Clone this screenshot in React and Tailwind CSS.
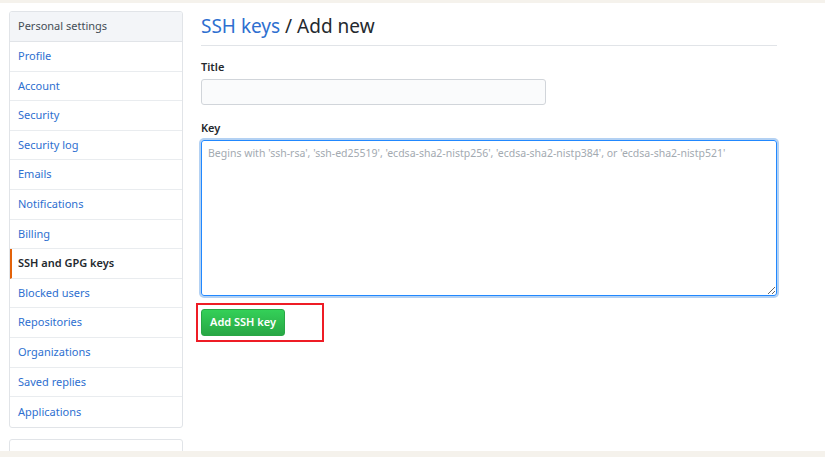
import React from 'react';

const items = [
  'Profile',
  'Account',
  'Security',
  'Security log',
  'Emails',
  'Notifications',
  'Billing',
  'SSH and GPG keys',
  'Blocked users',
  'Repositories',
  'Organizations',
  'Saved replies',
  'Applications',
];

export default function App() {
  return (
    <div className="w-[825px] h-[457px] overflow-hidden bg-white flex flex-col font-['Noto_Sans',sans-serif]">
      <div className="h-[3px] bg-[#f5f2ec] shrink-0" />

      <div className="flex flex-1 min-h-0 overflow-hidden pl-[9px] pt-[8px]">
        {/* Sidebar */}
        <div className="w-[174px] shrink-0 flex flex-col gap-[11px]">
          <nav className="shrink-0 border border-[#e1e4e8] rounded-[3px] overflow-hidden">
            <div className="h-[30px] flex items-center px-[8px] bg-[#f3f5f8] border-b border-[#e1e4e8] text-[11px] text-[#444d56]">
              Personal settings
            </div>
            {items.map((label, i) => {
              const active = label === 'SSH and GPG keys';
              return (
                <div
                  key={label}
                  className={
                    'h-[29.6px] flex items-center px-[8px] text-[11px] ' +
                    (i < items.length - 1 ? 'border-b border-[#e9ecef] ' : '') +
                    (active
                      ? 'border-l-2 border-l-[#e36209] pl-[6px] font-semibold text-[#24292e]'
                      : 'text-[#2e6fd0]')
                  }
                >
                  {label}
                </div>
              );
            })}
          </nav>
          <div className="shrink-0 border border-[#e1e4e8] rounded-[3px] h-[40px] px-[8px] pt-[7px] text-[11px] text-[#2e6fd0]">
            Developer settings
          </div>
        </div>

        {/* Main */}
        <main className="ml-[18px] w-[576px] pt-[2px]">
          <h1 className="text-[19px] leading-[26px] text-[#24292e] pb-[6px] border-b border-[#e1e4e8]">
            <span className="text-[#2e6fd0]">SSH keys</span> / Add new
          </h1>

          <div className="mt-[13px] text-[11px] font-semibold text-[#24292e]">Title</div>
          <div className="mt-[3px] w-[345px] h-[26px] bg-[#fafbfc] border border-[#d1d5da] rounded-[3px]" />

          <div className="mt-[15px] text-[11px] font-semibold text-[#24292e]">Key</div>
          <textarea
            className="mt-[4px] block w-full h-[156px] resize-y rounded-[3px] border border-[#2188ff] shadow-[0_0_0_2px_rgba(3,102,214,0.3)] px-[6px] py-[5px] text-[10.5px] leading-[14px] text-[#24292e] placeholder:text-[#a3aab1] outline-none font-['Noto_Sans',sans-serif]"
            placeholder="Begins with 'ssh-rsa', 'ssh-ed25519', 'ecdsa-sha2-nistp256', 'ecdsa-sha2-nistp384', or 'ecdsa-sha2-nistp521'"
          />

          <div className="relative mt-[12px] w-fit">
            <button className="h-[27px] px-[8px] rounded-[3px] border border-[#28a745] bg-gradient-to-b from-[#34d058] to-[#28a745] text-white text-[11px] font-semibold">
              Add SSH key
            </button>
            <div className="absolute left-[-5px] top-[-5px] w-[128px] h-[39px] border-2 border-[#ee1c25] pointer-events-none" />
          </div>
        </main>
      </div>

      <div className="h-[6px] bg-[#f5f2ec] shrink-0" />
    </div>
  );
}
